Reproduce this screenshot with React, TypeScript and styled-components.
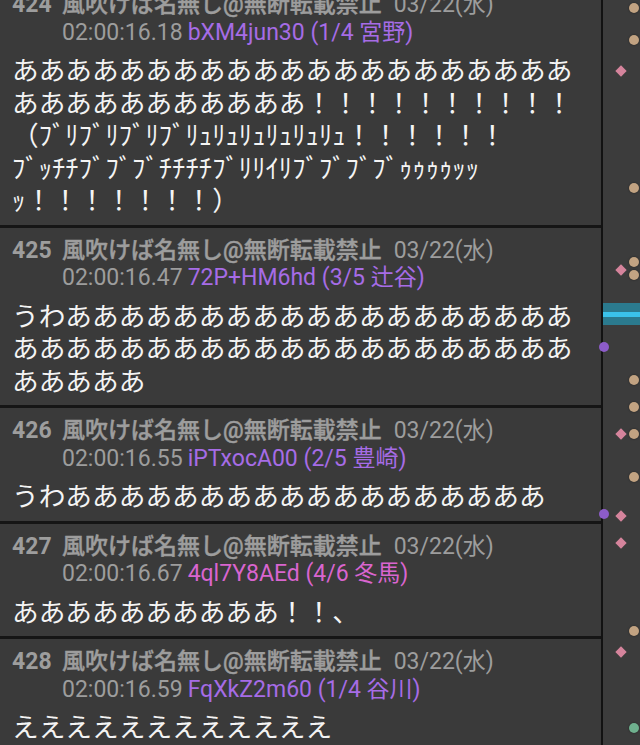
import React from 'react'
import styled, { createGlobalStyle } from 'styled-components'

const GlobalStyle = createGlobalStyle`
  html, body {
    margin: 0;
    padding: 0;
    background: #3b3b3b;
  }
  body {
    font-family: Roboto, "Noto Sans CJK JP", sans-serif;
    overflow: hidden;
  }
`

const Screen = styled.div`
  display: flex;
  width: 640px;
  height: 745px;
  overflow: hidden;
  background: #3b3b3b;
`

const Thread = styled.div`
  width: 601px;
  flex-shrink: 0;
  margin-top: -18px;
  display: flex;
  flex-direction: column;
`

const Post = styled.div`
  background: #3a3a3a;
  padding: 9px 20px 7px 12px;
  border-bottom: 3px solid #151515;
`

const Header = styled.div`
  display: grid;
  grid-template-columns: 40px 1fr;
  column-gap: 10px;
  font-size: 23px;
  line-height: 27.5px;
  color: #9d9d9d;
  white-space: nowrap;
`

const Num = styled.span`
  font-weight: bold;
`

const Meta = styled.div`
  display: flex;
  flex-direction: column;
`

const Line = styled.div<{ $gap: number }>`
  display: flex;
  gap: ${(p) => p.$gap}px;
`

const Name = styled.span`
  font-weight: 500;
  -webkit-text-stroke: 0.4px #9d9d9d;
`

const Id = styled.span<{ $color: string }>`
  color: ${(p) => p.$color};
`

const Body = styled.div`
  margin-top: 9px;
  font-size: 26.7px;
  line-height: 32.5px;
  color: #f4f4f4;
  white-space: pre-wrap;
  word-break: break-all;
`

const Gutter = styled.div`
  flex: 1;
  position: relative;
  border-left: 2px solid #121212;
  background: #3c3c3c;
`

const Dot = styled.div<{ $y: number; $color: string }>`
  position: absolute;
  top: ${(p) => p.$y - 5}px;
  left: 26px;
  width: 10px;
  height: 10px;
  border-radius: 50%;
  background: ${(p) => p.$color};
  box-shadow: 0 0 2px rgba(0, 0, 0, 0.5);
`

const Diamond = styled.div<{ $y: number }>`
  position: absolute;
  top: ${(p) => p.$y - 4}px;
  left: 14px;
  width: 8px;
  height: 8px;
  background: #d5849c;
  transform: rotate(45deg);
`

const HalfDot = styled.div<{ $y: number }>`
  position: absolute;
  top: ${(p) => p.$y - 5}px;
  left: -4px;
  width: 10px;
  height: 10px;
  border-radius: 50%;
  background: #8d5cc9;
`

const Band = styled.div`
  position: absolute;
  top: 303px;
  left: 0;
  right: 0;
  height: 22px;
  background: #2b7a8e;
  display: flex;
  align-items: center;

  &::after {
    content: '';
    flex: 1;
    height: 5px;
    background: #3ac2ea;
  }
`

const PURPLE = '#a66ce6'
const PINK = '#d965cf'
const TAN = '#c2a382'

const NAME = '風吹けば名無し@無断転載禁止'
const DATE = '03/22(水)'

const posts = [
  {
    no: 424,
    time: '02:00:16.18',
    id: 'bXM4jun30',
    count: '(1/4 宮野)',
    color: PURPLE,
    body:
      'あ'.repeat(32) +
      '！'.repeat(10) +
      '\n（ﾌﾞﾘﾌﾞﾘﾌﾞﾘﾌﾞﾘｭﾘｭﾘｭﾘｭﾘｭﾘｭ！！！！！！\nﾌﾞｯﾁﾁﾌﾞﾌﾞﾌﾞﾁﾁﾁﾁﾌﾞﾘﾘｲﾘﾌﾞﾌﾞﾌﾞﾌﾞｩｩｩｩｯｯ\nｯ！！！！！！！）',
  },
  {
    no: 425,
    time: '02:00:16.47',
    id: '72P+HM6hd',
    count: '(3/5 辻谷)',
    color: PURPLE,
    body: 'うわ' + 'あ'.repeat(45),
  },
  {
    no: 426,
    time: '02:00:16.55',
    id: 'iPTxocA00',
    count: '(2/5 豊崎)',
    color: PURPLE,
    body: 'うわ' + 'あ'.repeat(18),
  },
  {
    no: 427,
    time: '02:00:16.67',
    id: '4ql7Y8AEd',
    count: '(4/6 冬馬)',
    color: PINK,
    body: 'あ'.repeat(10) + '！！、',
  },
  {
    no: 428,
    time: '02:00:16.59',
    id: 'FqXkZ2m60',
    count: '(1/4 谷川)',
    color: PURPLE,
    body: 'え'.repeat(12),
  },
]

const tanDots = [8, 40, 188, 262, 275, 380, 407, 434, 477, 631]
const diamonds = [71, 270, 434, 516, 543, 652]

export default function App() {
  return (
    <>
      <GlobalStyle />
      <Screen>
        <Thread>
          {posts.map((p) => (
            <Post key={p.no}>
              <Header>
                <Num>{p.no}</Num>
                <Meta>
                  <Line $gap={12}>
                    <Name>{NAME}</Name>
                    <span>{DATE}</span>
                  </Line>
                  <Line $gap={5}>
                    <span>{p.time}</span>
                    <Id $color={p.color}>
                      {p.id} {p.count}
                    </Id>
                  </Line>
                </Meta>
              </Header>
              <Body>{p.body}</Body>
            </Post>
          ))}
        </Thread>
        <Gutter>
          <Band />
          {tanDots.map((y) => (
            <Dot key={'t' + y} $y={y} $color={TAN} />
          ))}
          <Dot $y={728} $color="#6fb08e" />
          {diamonds.map((y) => (
            <Diamond key={'d' + y} $y={y} />
          ))}
          <HalfDot $y={347} />
          <HalfDot $y={514} />
        </Gutter>
      </Screen>
    </>
  )
}
